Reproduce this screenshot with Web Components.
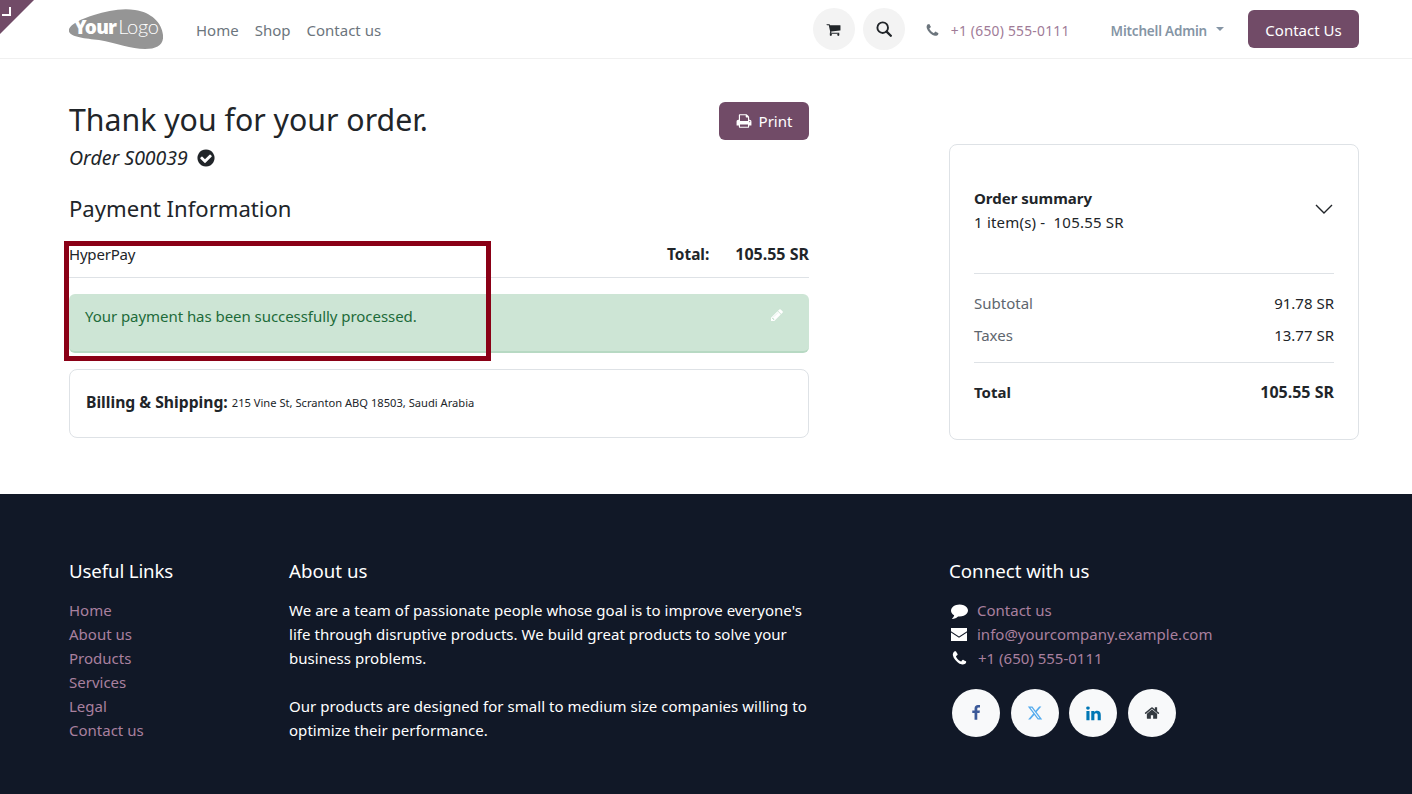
<!DOCTYPE html>
<html lang="en"><head><meta charset="utf-8"><title>Thank you for your order</title>
<style>
html,body{margin:0;padding:0;background:#fff}
body{font-family:"Noto Sans","Open Sans",sans-serif;font-size:15px;color:#212529;width:1412px;height:794px;overflow:hidden;position:relative}
</style></head><body>
<site-ribbon></site-ribbon>
<site-header></site-header>
<order-page></order-page>
<site-footer></site-footer>
<red-mark></red-mark>
<script>
const P={
phone:'M1600 1240q0 27-10 70.5t-21 68.5q-21 50-122 106-94 51-186 51-27 0-53-3.5t-57.5-12.5-47-14.5-55.5-20.5-49-18q-98-35-175-83-127-79-264-216t-216-264q-48-77-83-175-3-9-18-49t-20.5-55.5-14.5-47-12.5-57.5-3.5-53q0-92 51-186 56-101 106-122 25-11 68.5-21t70.5-10q14 0 21 3 18 6 53 76 11 19 30 54t35 63.5 31 53.5q3 4 17.5 25t21.5 35.5 7 28.5q0 20-28.5 50t-62 55-62 53-28.5 46q0 9 5 22.5t8.5 20.5 14 24 11.5 19q76 137 174 235t235 174q2 1 19 11.5t24 14 20.5 8.5 22.5 5q18 0 46-28.5t53-62 55-62 50-28.5q14 0 28.5 7t35.5 21.5 25 17.5q25 15 53.5 31t63.5 35 54 30q70 35 76 53 3 7 3 21z',
cart:'M704 1536q0 52-38 90t-90 38-90-38-38-90 38-90 90-38 90 38 38 90zm896 0q0 52-38 90t-90 38-90-38-38-90 38-90 90-38 90 38 38 90zm128-1088v512q0 24-16.5 42.5t-40.5 21.5l-1044 122q13 60 13 70 0 16-24 64h920q26 0 45 19t19 45-19 45-45 19h-1024q-26 0-45-19t-19-45q0-11 8-31.5t16-36 21.5-40 15.5-29.5l-177-823h-204q-26 0-45-19t-19-45 19-45 45-19h256q16 0 28.5 6.5t19.5 15.5 13 24.5 8 26 5.5 29.5 4.5 26h1201q26 0 45 19t19 45z',
check:'M1412 734q0-28-18-46l-91-90q-19-19-45-19t-45 19l-408 407-226-226q-19-19-45-19t-45 19l-91 90q-18 18-18 46 0 27 18 45l362 362q19 19 45 19 27 0 46-19l543-543q18-18 18-45zm252 162q0 209-103 385.5t-279.5 279.5-385.5 103-385.5-103-279.5-279.5-103-385.5 103-385.5 279.5-279.5 385.5-103 385.5 103 279.5 279.5 103 385.5z',
print:'M448 1536h896v-256h-896v256zm0-640h896v-384h-160q-40 0-68-28t-28-68v-160h-640v640zm1152 64q0-26-19-45t-45-19-45 19-19 45 19 45 45 19 45-19 19-45zm128 0v416q0 13-9.5 22.5t-22.5 9.5h-224v160q0 40-28 68t-68 28h-960q-40 0-68-28t-28-68v-160h-224q-13 0-22.5-9.5t-9.5-22.5v-416q0-79 56.5-135.5t135.5-56.5h64v-544q0-40 28-68t68-28h672q40 0 88 20t76 48l152 152q28 28 48 76t20 88v256h64q79 0 135.5 56.5t56.5 135.5z',
pencil:'M491 1536l91-91-235-235-91 91v107h128v128h107zm523-928q0-22-22-22-10 0-17 7l-542 542q-7 7-7 17 0 22 22 22 10 0 17-7l542-542q7-7 7-17zm-54-192l416 416-832 832h-416v-416zm683 96q0 53-37 90l-166 166-416-416 166-165q36-38 90-38 53 0 91 38l235 234q37 39 37 91z',
comment:'M1792 896q0 174-120 321.5t-326 233-450 85.5q-70 0-145-8-198 175-460 242-49 14-114 22-17 2-30.5-9t-17.5-29v-1q-3-4-.5-12t2-10 4.5-9.5l6-9 7-8.5 8-9q7-8 31-34.5t34.5-38 31-39.5 32.5-51 27-59 26-76q-157-89-247.5-220t-90.5-281q0-130 71-248.5t191-204.5 286-136.5 348-50.5q244 0 450 85.5t326 233 120 321.5z',
facebook:'M1343 12v264h-157q-86 0-116 36t-30 108v189h293l-39 296h-254v759h-306v-759h-255v-296h255v-218q0-186 104-288.5t277-102.5q147 0 228 12z',
linkedin:'M477 625v991h-330v-991h330zm21-306q1 73-50.5 122t-135.5 49h-2q-82 0-132-49t-50-122q0-74 51.5-122.5t134.5-48.5 133 48.5 51 122.5zm1166 729v568h-329v-530q0-105-40.5-164.5t-126.5-59.5q-63 0-105.5 34.5t-63.5 85.5q-11 30-11 81v553h-329q2-399 2-647t-1-296l-1-48h329v144h-2q20-32 41-56t56.5-52 87-43.5 114.5-15.5q171 0 275 113.5t104 332.5z',
home:'M1472 992v480q0 26-19 45t-45 19h-384v-384h-256v384h-384q-26 0-45-19t-19-45v-480q0-1 .5-3t.5-3l575-474 575 474q1 2 1 6zm223-69l-62 74q-8 9-21 11h-3q-13 0-21-7l-692-577-692 577q-12 8-24 7-13-2-21-11l-62-74q-8-10-7-23.5t11-21.5l719-599q32-26 76-26t76 26l244 204v-195q0-14 9-23t23-9h192q14 0 23 9t9 23v408l219 182q10 8 11 21.5t-7 23.5z'
};
const X='M389.2 48h70.6L305.6 224.2 487 464H345L233.7 318.6 106.5 464H35.8L200.7 275.5 26.8 48H172.4L272.9 180.9 389.2 48zM364.4 421.8h39.1L151.1 88h-42L364.4 421.8z';
function def(name,html){customElements.define(name,class extends HTMLElement{constructor(){super();this.attachShadow({mode:'open'}).innerHTML=html;}})}
class XIcon extends HTMLElement{
 connectedCallback(){
  const n=this.getAttribute('name'),s=this.getAttribute('size')||'16',c=this.getAttribute('color')||'currentColor';
  let inner,vb='0 0 1792 1792';
  if(n==='x'){vb='0 0 512 512';inner=`<path d="${X}"/>`}
  else if(n==='search'){vb='0 0 16 16';inner=`<circle cx="6.7" cy="6.7" r="5.3" fill="none" stroke="${c}" stroke-width="1.9"/><path d="M10.6 10.6l4.2 4.2" stroke="${c}" stroke-width="2.3" stroke-linecap="round"/>`}
  else if(n==='envelope'){vb='0 0 16 13';inner=`<path d="M0 0h16v3.2L8 8.4 0 3.2Z"/><path d="M0 4.6l8 5.2 8-5.2V13H0Z"/>`}
  else inner=`<path d="${P[n]}"/>`;
  const h=n==='envelope'?Math.round(s*13/16):s;
  this.attachShadow({mode:'open'}).innerHTML=`<style>:host{display:inline-flex;flex:none;line-height:0}</style><svg width="${s}" height="${h}" viewBox="${vb}" fill="${c}">${inner}</svg>`;
 }
}
customElements.define('x-icon',XIcon);

def('site-ribbon',`<style>:host{position:absolute;left:0;top:0;width:34px;height:34px;background:#714b67;clip-path:polygon(0 0,100% 0,0 100%);z-index:3}
i{position:absolute;left:2px;top:7px;width:7px;height:7px;border-right:2px solid #fff;border-bottom:2px solid #fff}</style><i></i>`);

def('site-header',`<style>
:host{display:flex;align-items:center;height:59px;box-sizing:border-box;padding:0 53px 0 69px;border-bottom:1px solid #f0f0f0;font-size:15px}
svg.logo{display:block;flex:none}
nav{display:flex;gap:16px;margin-left:33px;color:#6c757d;padding-top:2px}
.r{margin-left:auto;display:flex;align-items:center}
.c{width:42px;height:42px;border-radius:50%;background:#f3f3f3;display:flex;align-items:center;justify-content:center;color:#212529}
.c+.c{margin-left:8px}
.ph{margin-left:20px;display:flex;align-items:center;color:#6c757d;padding-top:2px}
.ph span{margin-left:11px;font-size:13.8px;color:#a07b97;letter-spacing:.25px}
.u{margin-left:41px;color:#8595a5;font-size:13.5px;font-weight:600;letter-spacing:-.2px;display:flex;align-items:center;padding-top:3px}
.u i{margin-left:9px;width:0;height:0;border:4px solid transparent;border-top-color:#8595a5;border-bottom:0;margin-top:-3px}
.b{margin-left:24px;width:111px;height:38px;box-sizing:border-box;padding-top:1px;border-radius:6px;background:#714b67;color:#fff;display:flex;align-items:center;justify-content:center}
</style>
<svg class="logo" width="94" height="40" viewBox="0 0 94 40"><path d="M0 20C2 15 12 10 25 6 38 2 52-1 66 1 82 3 93 14 94 26 95 36 88 40 76 40 62 40 48 34 30 31 15 29-2 28 0 20Z" fill="#959595"/><text x="5" y="25" fill="#fff"><tspan font-family="Noto Sans,sans-serif" font-size="19" font-weight="900" letter-spacing="-.8">Your</tspan><tspan dx="2" font-family="Lato,sans-serif" font-size="20" font-weight="300" letter-spacing="-.3">Logo</tspan></text></svg>
<nav><span>Home</span><span>Shop</span><span>Contact us</span></nav>
<div class="r">
<div class="c"><x-icon name="cart" size="15"></x-icon></div>
<div class="c"><x-icon name="search" size="16"></x-icon></div>
<div class="ph"><x-icon name="phone" size="15"></x-icon><span>+1 (650) 555-0111</span></div>
<div class="u">Mitchell Admin<i></i></div>
<div class="b">Contact Us</div>
</div>`);

def('order-main',`<style>
:host{display:block;width:740px;flex:none}
.t{display:flex;justify-content:space-between;align-items:flex-start}
h1{margin:-1px 0 0;font-weight:400;font-size:30.25px;line-height:38px}
.print{width:90px;height:38px;border-radius:6px;background:#714b67;color:#fff;display:flex;align-items:center;justify-content:center;gap:7px}
.o{display:flex;align-items:center;gap:8px;font-style:italic;font-size:19.5px;line-height:24px;margin-top:6px}
h3{margin:23px 0 0;font-weight:400;font-size:22.1px;line-height:30px}
.row{display:flex;justify-content:space-between;align-items:center;height:46px;box-sizing:border-box;margin-top:9px;padding-bottom:2px;border-bottom:1px solid #dee2e6}
.row>span:first-child{letter-spacing:-.2px}
.row b{font-weight:700;font-size:15.4px}
.row b+b{margin-left:26px;font-size:16px}
.alert{margin-top:16px;height:59px;box-sizing:border-box;background:#cde5d5;border-bottom:2px solid #b7d9c3;border-radius:6px;padding:11px 16px;color:#1d6b3a;display:flex;justify-content:space-between;line-height:22px;letter-spacing:-.05px}
.alert x-icon{margin:3px 9px 0 0}
.addr{margin-top:16px;height:69px;box-sizing:border-box;border:1px solid #dee2e6;border-radius:8px;padding:0 16px 3px;display:flex;align-items:center;gap:4px}
.addr b{font-size:15.7px}.addr span{font-size:11.15px;color:#212529}
</style>
<div class="t"><h1>Thank you for your order.</h1><div class="print"><x-icon name="print" size="16"></x-icon>Print</div></div>
<div class="o">Order S00039 <x-icon name="check" size="20"></x-icon></div>
<h3>Payment Information</h3>
<div class="row"><span>HyperPay</span><span><b>Total:</b><b>105.55 SR</b></span></div>
<div class="alert"><span>Your payment has been successfully processed.</span><x-icon name="pencil" size="14" color="#fff"></x-icon></div>
<div class="addr"><b>Billing &amp; Shipping:</b><span>215 Vine St, Scranton ABQ 18503, Saudi Arabia</span></div>`);

def('order-summary',`<style>
:host{display:block;width:410px;height:296px;box-sizing:border-box;margin-top:42px;border:1px solid #dee2e6;border-radius:8px;padding:41px 24px 0}
.h{display:flex;justify-content:space-between;align-items:center;height:47px;line-height:24px}
.h b{display:block}
.h .i{letter-spacing:.2px}
.h svg{display:block;margin:-2px 1px 0 0}
hr{border:0;border-top:1px solid #dee2e6;margin:0}
.a{margin-top:40px}
.l{display:flex;justify-content:space-between;line-height:24px;height:32px;align-items:center}
.l span:first-child{color:#5e666e}
.t{display:flex;justify-content:space-between;font-weight:700;margin-top:17px;line-height:24px}
.t span+span{font-size:16px}
</style>
<div class="h"><div><b>Order summary</b><span class="i">1 item(s) -&nbsp; 105.55 SR</span></div><svg width="18" height="18" viewBox="0 0 18 18" fill="none" stroke="#212529" stroke-width="1.4"><path d="M1 5l8 8 8-8"/></svg></div>
<hr class="a">
<div class="l" style="margin-top:13px"><span>Subtotal</span><span>91.78 SR</span></div>
<div class="l"><span>Taxes</span><span>13.77 SR</span></div>
<hr style="margin-top:11px">
<div class="t"><span>Total</span><span>105.55 SR</span></div>`);

def('order-page',`<style>:host{display:flex;justify-content:space-between;box-sizing:border-box;height:435px;padding:43px 53px 0 69px}</style><order-main></order-main><order-summary></order-summary>`);

def('site-footer',`<style>
:host{display:grid;grid-template-columns:220px 660px 410px;box-sizing:border-box;height:300px;padding:62px 53px 0 69px;background:#111827;color:#fff;line-height:24px}
h5{margin:0 0 12px;font-weight:400;font-size:18.7px;line-height:30px}
h5.u{letter-spacing:-.15px}
a{display:block;color:#a9809f;text-decoration:none}
p{margin:0 0 24px;width:530px;letter-spacing:.04px}
.k{display:flex;align-items:center;height:24px;color:#a9809f}
.k x-icon{width:18px;margin-left:1px;margin-right:9px;justify-content:center}
.s{display:flex;margin:19px 0 0 3px;gap:10.7px}
.s div{width:48px;height:48px;border-radius:50%;background:#f8f9fa;display:flex;align-items:center;justify-content:center}
</style>
<div><h5 class="u">Useful Links</h5><a>Home</a><a>About us</a><a>Products</a><a>Services</a><a>Legal</a><a>Contact us</a></div>
<div><h5>About us</h5><p>We are a team of passionate people whose goal is to improve everyone's life through disruptive products. We build great products to solve your business problems.</p><p>Our products are designed for small to medium size companies willing to optimize their performance.</p></div>
<div><h5>Connect with us</h5>
<div class="k"><x-icon name="comment" size="17" color="#fff"></x-icon>Contact us</div>
<div class="k"><x-icon name="envelope" size="16" color="#fff"></x-icon>info@yourcompany.example.com</div>
<div class="k"><x-icon name="phone" size="17" color="#fff" style="margin-right:10px"></x-icon>+1 (650) 555-0111</div>
<div class="s"><div><x-icon name="facebook" size="16" color="#3b5998"></x-icon></div><div><x-icon name="x" size="16" color="#55acee"></x-icon></div><div><x-icon name="linkedin" size="17" color="#0077b5"></x-icon></div><div><x-icon name="home" size="16" color="#343a40"></x-icon></div></div>
</div>`);

def('red-mark',`<style>:host{position:absolute;left:64px;top:241px;width:427px;height:120px;box-sizing:border-box;border:5px solid #8a0016;z-index:4;pointer-events:none}</style>`);
</script>
</body></html>
